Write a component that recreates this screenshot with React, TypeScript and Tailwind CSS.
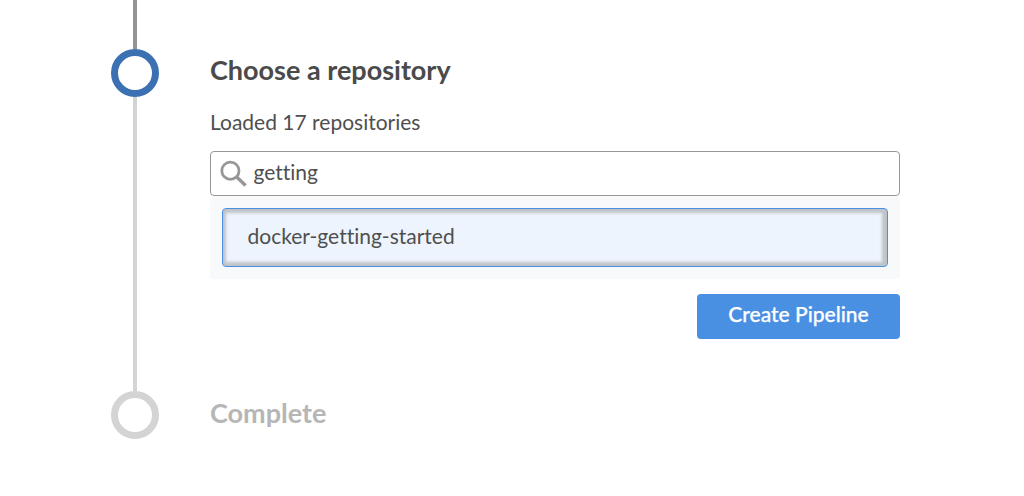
function StepMarker({ active = false }: { active?: boolean }) {
  return (
    <div
      className={`size-12 shrink-0 rounded-full border-[7px] bg-white ${
        active ? 'border-[#3b70b2]' : 'border-[#d4d4d4]'
      }`}
    />
  );
}

function SearchIcon() {
  return (
    <svg className="size-7 shrink-0" viewBox="0 0 28 28" fill="none" stroke="#979797" aria-hidden="true">
      <circle cx="11.4" cy="10.7" r="8.6" strokeWidth="2.8" />
      <path d="M17.2 16.6L26.6 25.6" strokeWidth="3.4" />
    </svg>
  );
}

export default function App() {
  return (
    <main className="flex h-[496px] w-[1024px] overflow-hidden bg-white pl-[111px] font-['Lato',sans-serif] text-[#4f4f4f] [font-variant-ligatures:none]">
      <div className="flex w-12 flex-col items-center">
        <div className="h-[49px] w-1 bg-[#949494]" />
        <StepMarker active />
        <div className="h-[294px] w-1 bg-[#d4d4d4]" />
        <StepMarker />
      </div>

      <div className="ml-[51px] w-[690px]">
        <section className="flex h-[391px] flex-col pt-[52px]">
          <h2 className="text-[27px] leading-9 font-bold text-[#4a4a4a]">Choose a repository</h2>
          <p className="mt-5 h-[43px] text-[21px] leading-7">Loaded 17 repositories</p>
          <label className="flex h-[45px] shrink-0 items-center rounded-[4px] border border-[#979797] bg-white pl-2">
            <SearchIcon />
            <input
              className="ml-[6.5px] min-w-0 flex-1 bg-transparent pb-1 text-[21px] leading-7 outline-none [font-variant-ligatures:none]"
              defaultValue="getting"
              aria-label="Search repositories"
            />
          </label>
          <div className="h-[83px] shrink-0 rounded-[4px] bg-[#f8f9fb] p-3">
            <button className="flex h-[59px] w-full items-center rounded-[4px] border border-[#4a90e2] bg-[#edf4fd] pb-1 pl-[24.5px] text-[21px] leading-7 shadow-[inset_-1px_0_3px_4px_#bfc4ca]">
              docker-getting-started
            </button>
          </div>
          <button className="mt-[15px] flex h-[45px] w-[203px] shrink-0 items-center justify-center self-end rounded-[4px] bg-[#4a90e2] pb-1.5 text-[21px] leading-7 font-medium text-white [-webkit-text-stroke:0.25px_white]">
            Create Pipeline
          </button>
        </section>
        <h2 className="pt-1 text-[27px] leading-9 font-bold text-[#b6b6b6]">Complete</h2>
      </div>
    </main>
  );
}
